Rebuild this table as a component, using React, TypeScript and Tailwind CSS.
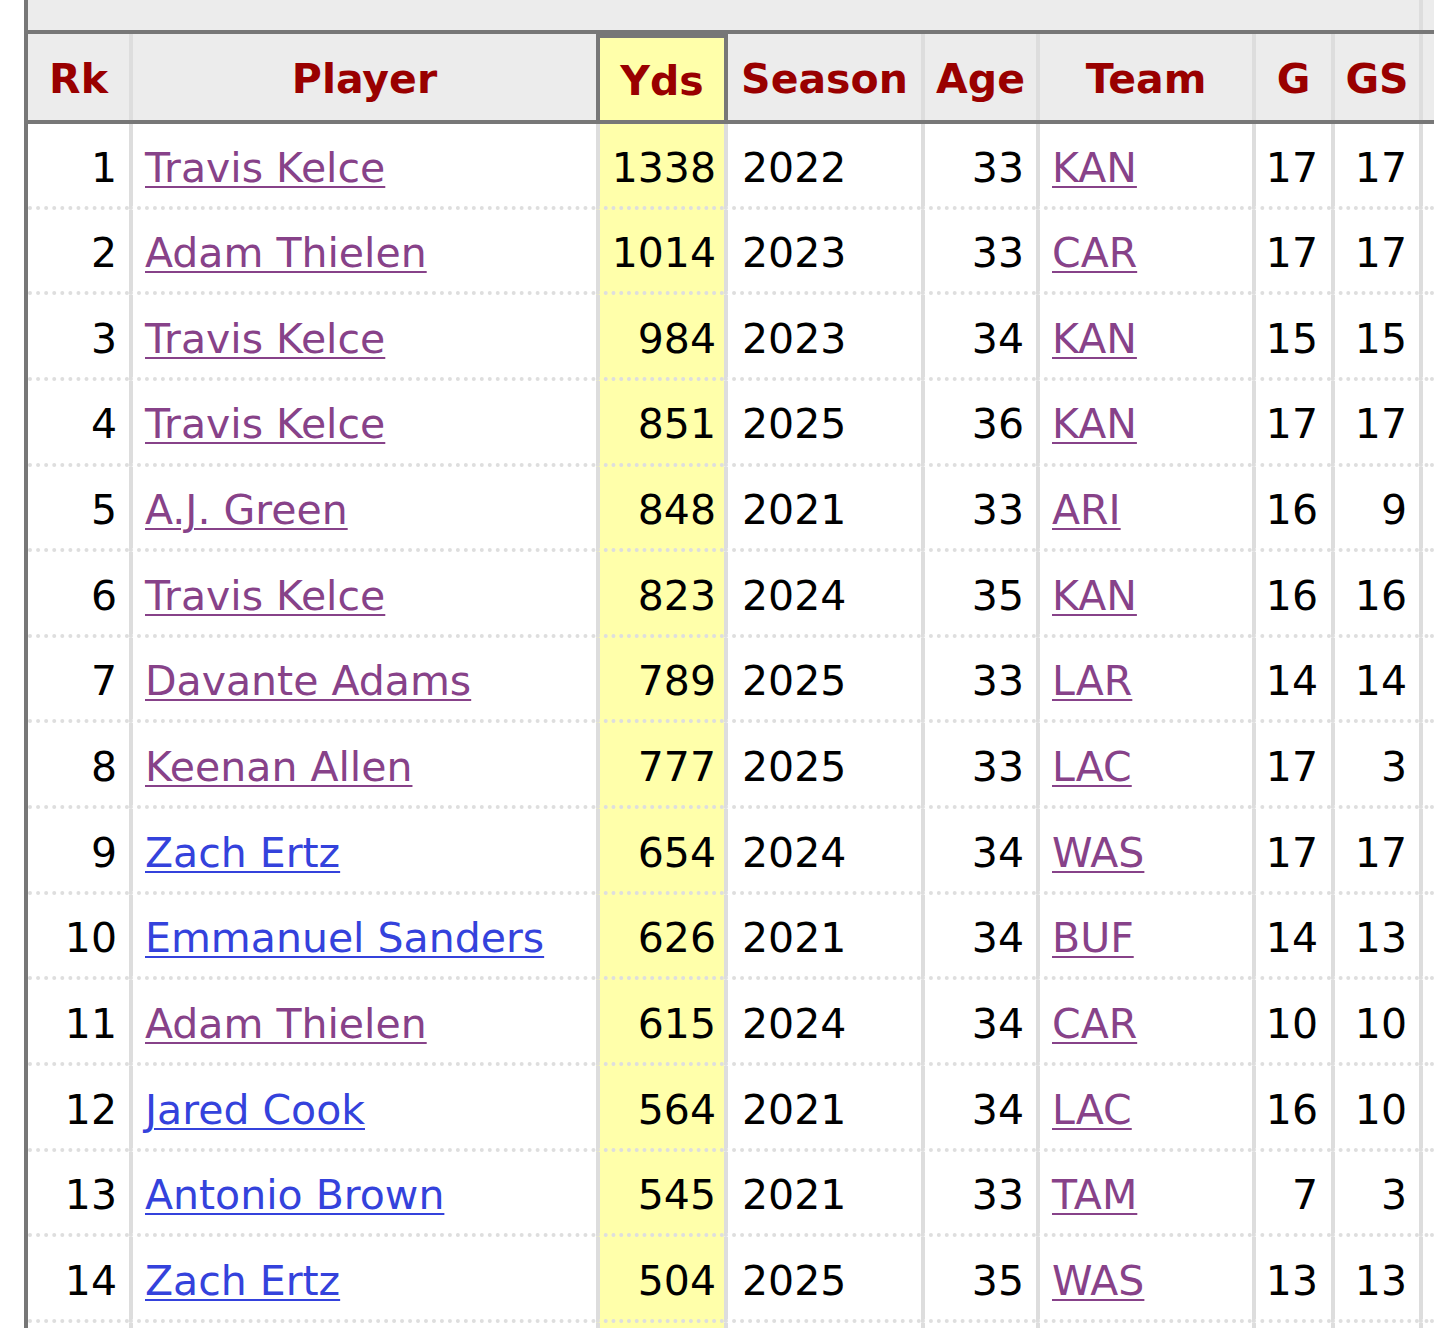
import React from 'react';

type Row = {
  rk: number;
  player: string;
  visited: boolean;
  yds: number;
  season: number;
  age: number;
  team: string;
  g: number;
  gs: number;
};

const rows: Row[] = [
  { rk: 1, player: 'Travis Kelce', visited: true, yds: 1338, season: 2022, age: 33, team: 'KAN', g: 17, gs: 17 },
  { rk: 2, player: 'Adam Thielen', visited: true, yds: 1014, season: 2023, age: 33, team: 'CAR', g: 17, gs: 17 },
  { rk: 3, player: 'Travis Kelce', visited: true, yds: 984, season: 2023, age: 34, team: 'KAN', g: 15, gs: 15 },
  { rk: 4, player: 'Travis Kelce', visited: true, yds: 851, season: 2025, age: 36, team: 'KAN', g: 17, gs: 17 },
  { rk: 5, player: 'A.J. Green', visited: true, yds: 848, season: 2021, age: 33, team: 'ARI', g: 16, gs: 9 },
  { rk: 6, player: 'Travis Kelce', visited: true, yds: 823, season: 2024, age: 35, team: 'KAN', g: 16, gs: 16 },
  { rk: 7, player: 'Davante Adams', visited: true, yds: 789, season: 2025, age: 33, team: 'LAR', g: 14, gs: 14 },
  { rk: 8, player: 'Keenan Allen', visited: true, yds: 777, season: 2025, age: 33, team: 'LAC', g: 17, gs: 3 },
  { rk: 9, player: 'Zach Ertz', visited: false, yds: 654, season: 2024, age: 34, team: 'WAS', g: 17, gs: 17 },
  { rk: 10, player: 'Emmanuel Sanders', visited: false, yds: 626, season: 2021, age: 34, team: 'BUF', g: 14, gs: 13 },
  { rk: 11, player: 'Adam Thielen', visited: true, yds: 615, season: 2024, age: 34, team: 'CAR', g: 10, gs: 10 },
  { rk: 12, player: 'Jared Cook', visited: false, yds: 564, season: 2021, age: 34, team: 'LAC', g: 16, gs: 10 },
  { rk: 13, player: 'Antonio Brown', visited: false, yds: 545, season: 2021, age: 33, team: 'TAM', g: 7, gs: 3 },
  { rk: 14, player: 'Zach Ertz', visited: false, yds: 504, season: 2025, age: 35, team: 'WAS', g: 13, gs: 13 },
];

const cols = 'grid grid-cols-[101px_467px_128px_197px_115px_216px_79px_88px_1fr]';

// body cell: dotted row line at the bottom, solid light column separator on the left
const td = 'h-[85.65px] border-b-4 [border-bottom-style:dotted] border-b-[#dedede] flex items-center pt-[7px]';
const sep = 'border-l-4 border-l-[#dddddd]';
const th = 'h-[86px] bg-[#ececec] flex items-center justify-center pt-[5px] font-bold text-[#990000]';

function Link({ children, visited }: { children: React.ReactNode; visited: boolean }) {
  return (
    <a
      href="#"
      className={`underline decoration-2 underline-offset-[4px] ${visited ? 'text-[#874289]' : 'text-[#3442dc]'}`}
    >
      {children}
    </a>
  );
}

export default function App() {
  return (
    <div className="min-h-screen bg-white">
      <div
        className="ml-6 border-l-4 border-[#777777] text-[41px] leading-normal text-black"
        style={{ fontFamily: '"DejaVu Sans", Verdana, sans-serif' }}
      >
        {/* over header band */}
        <div className={`${cols} h-[30px]`}>
          <div className="col-span-8 bg-[#ececec]"></div>
          <div className="bg-[#ececec] border-l-4 border-[#dddddd]"></div>
        </div>

        {/* header row */}
        <div className={`${cols} border-y-4 border-[#777777]`}>
          <div className={th}>Rk</div>
          <div className={`${th} border-l-4 border-[#dddddd]`}>Player</div>
          <div className={`${th} !bg-[#ffffaa] border-l-4 border-t-4 border-[#777777]`}>Yds</div>
          <div className={`${th} border-l-4 border-[#777777]`}>Season</div>
          <div className={`${th} border-l-4 border-[#dddddd]`}>Age</div>
          <div className={`${th} border-l-4 border-[#dddddd]`}>Team</div>
          <div className={`${th} border-l-4 border-[#dddddd]`}>G</div>
          <div className={`${th} border-l-4 border-[#dddddd]`}>GS</div>
          <div className={`${th} border-l-4 border-[#dddddd]`}></div>
        </div>

        {/* body */}
        {rows.map((r) => (
          <div key={r.rk} className={cols}>
            <div className={`${td} justify-end pr-[12px]`}>{r.rk}</div>
            <div className={`${td} ${sep} pl-[12px] whitespace-nowrap`}>
              <Link visited={r.visited}>{r.player}</Link>
            </div>
            <div className={`${td} ${sep} justify-end pr-[8px] bg-[#ffffaa]`}>{r.yds}</div>
            <div className={`${td} ${sep} pl-[14px]`}>{r.season}</div>
            <div className={`${td} ${sep} justify-end pr-[12px]`}>{r.age}</div>
            <div className={`${td} ${sep} pl-[12px]`}>
              <Link visited>{r.team}</Link>
            </div>
            <div className={`${td} ${sep} justify-end pr-[13px]`}>{r.g}</div>
            <div className={`${td} ${sep} justify-end pr-[12px]`}>{r.gs}</div>
            <div className={`${td} ${sep}`}></div>
          </div>
        ))}

        {/* start of next row, cut off by the window */}
        <div className={`${cols} h-[5px]`}>
          <div></div>
          <div className={sep}></div>
          <div className={`${sep} bg-[#ffffaa]`}></div>
          <div className={sep}></div>
          <div className={sep}></div>
          <div className={sep}></div>
          <div className={sep}></div>
          <div className={sep}></div>
          <div className={sep}></div>
        </div>
      </div>
    </div>
  );
}
